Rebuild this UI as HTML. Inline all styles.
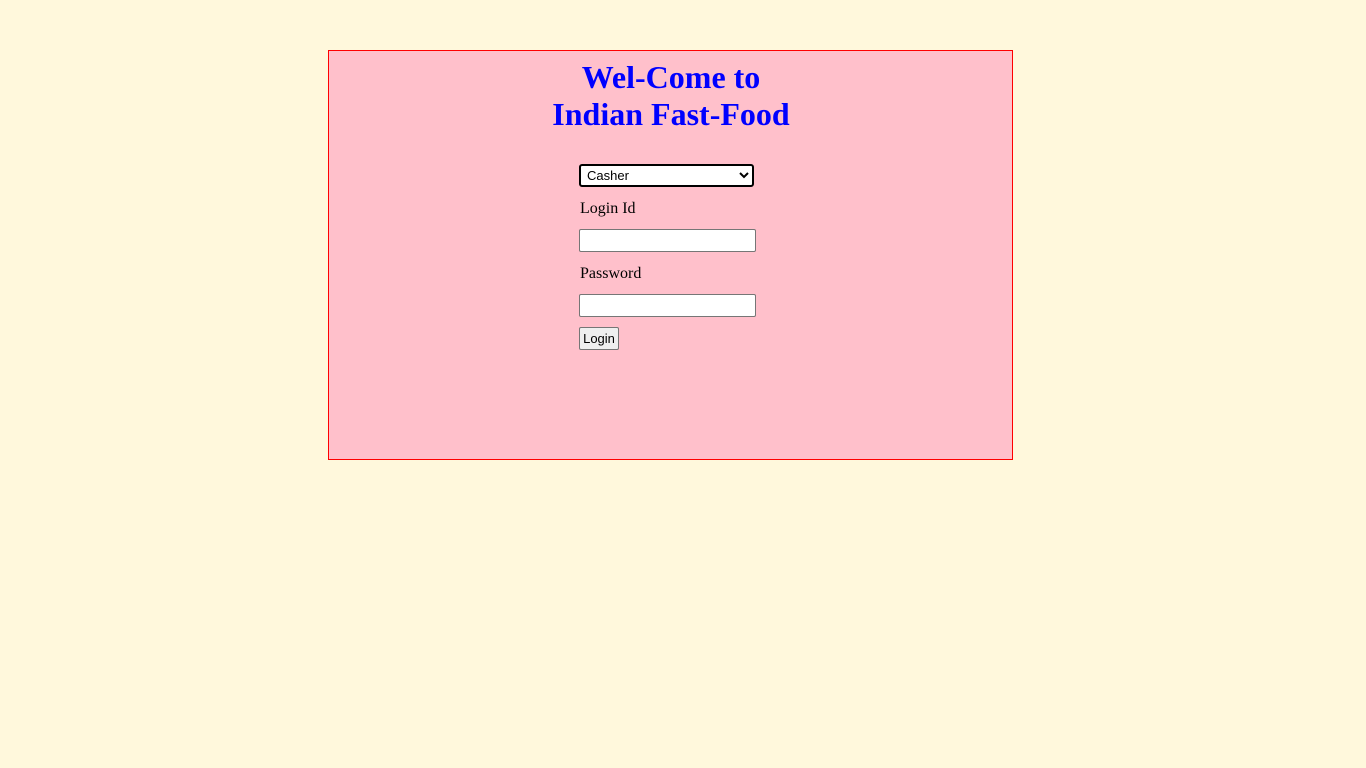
<!DOCTYPE html>
<html><head><style>
body{margin:0;background:#FFF8DC;width:1366px;height:768px;position:relative;font-family:"Liberation Serif",serif;}
.box{position:absolute;left:328px;top:50px;width:683px;height:408px;border:1px solid red;background:#FFC0CB;}
h1{position:absolute;left:0;top:8px;width:684px;margin:0;text-align:center;color:blue;font-size:32px;line-height:37px;font-weight:bold;}
select{position:absolute;left:579px;top:164px;width:175px;height:23px;font:13px "Liberation Sans",sans-serif;border:2px solid #000;border-radius:3px;background:#fff;padding:0 2px;box-sizing:border-box;margin:0;}
input[type=text],input[type=password]{position:absolute;left:579px;width:177px;height:23px;box-sizing:border-box;border:1px solid #767676;border-radius:2px;margin:0;background:#fff;}
button{position:absolute;left:579px;top:327px;width:40px;height:23px;font:13px "Liberation Sans",sans-serif;border:1px solid #767676;border-radius:2px;background:#efefef;padding:0;margin:0;}
.l{position:absolute;left:580px;font-size:16px;line-height:18px;color:#000;}
</style></head><body>
<div class="box"><h1>Wel-Come to<br>Indian Fast-Food</h1></div>
<select><option>Casher</option></select>
<div class="l" style="top:200px">Login Id</div>
<input type="text" style="top:229px">
<div class="l" style="top:265px">Password</div>
<input type="password" style="top:294px">
<button>Login</button>
</body></html>
